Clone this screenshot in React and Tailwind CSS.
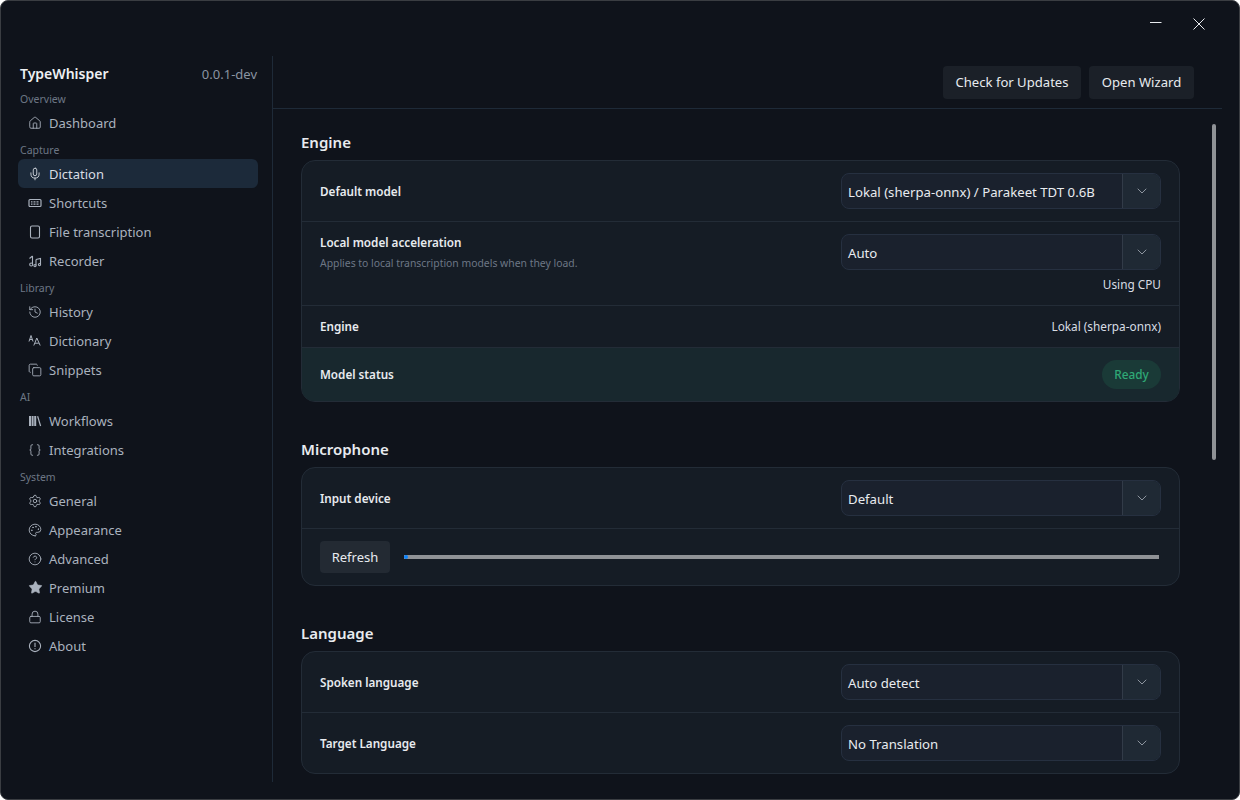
import React from "react";
import { House, Mic, History, Copy, Braces, Settings, Palette, CircleHelp, Star, Lock, ChevronDown } from "lucide-react";

const svgProps = ({ size = 14, strokeWidth, ...p }) => ({ width: size, height: size, ...p });

const KeyboardIcon = (p) => (
  <svg viewBox="0 0 14 14" fill="none" {...svgProps(p)}>
    <rect x="1" y="3.5" width="12" height="7" rx="1" stroke="currentColor" strokeWidth="1.2" />
    <path d="M3 5.8h8M3 8.2h8" stroke="currentColor" strokeWidth="1.3" strokeDasharray="1 .5" />
  </svg>
);
const FileIcon = (p) => (
  <svg viewBox="0 0 14 14" fill="none" {...svgProps(p)}>
    <rect x="2.5" y="1" width="9" height="12" rx="1.5" stroke="currentColor" strokeWidth="1.1" />
  </svg>
);
const NotesIcon = (p) => (
  <svg viewBox="0 0 14 14" fill="none" stroke="currentColor" strokeWidth="1.1" {...svgProps(p)}>
    <path d="M4.5 10V2M4.5 2 L1.5 4.5M8 5.5l4.5-1v6" />
    <circle cx="3.2" cy="10.5" r="1.5" />
    <path d="M8 5.5v6" />
    <circle cx="7" cy="11.6" r="1.1" />
    <circle cx="11.5" cy="10.6" r="1.1" />
  </svg>
);
const FontIcon = (p) => (
  <svg viewBox="0 0 14 14" fill="none" stroke="currentColor" strokeWidth="1" {...svgProps(p)}>
    <path d="M1 7.5 3 1.5l2 6M1.7 5.5h2.6" />
    <path d="M5.8 11.5 8.8 4l3.4 7.5M7 9.2h3.8" />
  </svg>
);
const InfoIcon = (p) => (
  <svg viewBox="0 0 14 14" fill="none" stroke="currentColor" strokeWidth="1.1" {...svgProps(p)}>
    <circle cx="7" cy="7" r="5.6" />
    <path d="M7 3.8v4.2M7 9.2v1" />
  </svg>
);
const BooksIcon = (p) => (
  <svg viewBox="0 0 14 14" {...svgProps(p)}>
    <path fill="currentColor" d="M1 2h2v10H1zM3.6 2h2v10h-2zM6.2 2h2v10h-2z" />
    <path fill="none" stroke="currentColor" strokeWidth="1.2" d="M9.6 2.2 12.6 12" />
  </svg>
);
const StarIcon = (p) => <Star fill="currentColor" {...p} strokeWidth={1} size={15} style={{ marginRight: -1 }} />;

const GROUPS = [
  ["Overview", [["Dashboard", House]]],
  ["Capture", [["Dictation", Mic, true], ["Shortcuts", KeyboardIcon], ["File transcription", FileIcon], ["Recorder", NotesIcon]]],
  ["Library", [["History", History], ["Dictionary", FontIcon], ["Snippets", Copy]]],
  ["AI", [["Workflows", BooksIcon], ["Integrations", Braces]]],
  ["System", [["General", Settings], ["Appearance", Palette], ["Advanced", CircleHelp], ["Premium", StarIcon], ["License", Lock], ["About", InfoIcon]]],
];

function Select({ value }) {
  return (
    <div className="flex h-9 w-80 shrink-0 overflow-hidden rounded-lg border border-[#263040] bg-[#1a212d]">
      <div className="flex flex-1 items-center pl-[6px] pt-[3px] text-[13.2px] text-[#e8ebef]">{value}</div>
      <div className="flex w-[38px] items-center justify-center border-l border-[#323b48] bg-[#1f2934] pb-px text-[#aab1bb]">
        <ChevronDown size={16} strokeWidth={1.2} />
      </div>
    </div>
  );
}

function Row({ label, desc, children, className = "h-[61px] items-center" }) {
  return (
    <div className={`flex justify-between border-b border-[#232c37] px-[18px] last:border-b-0 ${className}`}>
      <div>
        <div className="text-[11.7px] font-semibold leading-[18px] text-[#e8ebef]">{label}</div>
        {desc && <div className="mt-[5px] text-[10.4px] leading-[14px] text-[#6d7785]">{desc}</div>}
      </div>
      {children}
    </div>
  );
}

function Section({ title, children }) {
  return (
    <section className="mb-[35px]">
      <h2 className="mb-[6px] h-6 text-[15px] font-semibold leading-6 text-[#e8ebef]">{title}</h2>
      <div className="rounded-[14px] border border-[#232c37] bg-[#151c25]">{children}</div>
    </section>
  );
}

export default function App() {
  return (
    <div className="flex h-[800px] w-[1240px] flex-col overflow-hidden rounded-lg border border-[#3a3d42] bg-[#0f131b] font-['Noto_Sans',sans-serif]">
      <header className="flex h-[55px] shrink-0 items-start justify-end text-[#e8ebef]">
        <svg width="12" height="12" viewBox="0 0 12 12" className="mr-[31px] mt-[15px]" stroke="currentColor" strokeWidth="1"><path d="M0 6.5h11.5" /></svg>
        <svg width="12" height="12" viewBox="0 0 12 12" className="mr-[34px] mt-[17px]" stroke="currentColor" strokeWidth="1" fill="none"><path d="M.5.5l11 11M11.5.5l-11 11" /></svg>
      </header>
      <div className="mb-[17px] flex min-h-0 flex-1">
        <aside className="w-[272px] shrink-0 border-r border-[#1e2a38] pl-[17px] pr-[14px]">
          <div className="flex h-[30px] items-center justify-between pl-[2px] pr-px pt-[6px]">
            <span className="text-[14px] font-semibold leading-5 text-[#eef0f3]">TypeWhisper</span>
            <span className="text-[13px] leading-5 text-[#8a94a2]">0.0.1-dev</span>
          </div>
          <nav>
            {GROUPS.map(([name, items]) => (
              <div key={name}>
                <div className="mb-px mt-[5px] h-4 pl-[2px] text-[10.5px] leading-4 text-[#6d7785]">{name}</div>
                {items.map(([label, Icon, active]) => (
                  <div key={label} className={`flex h-[29px] items-center gap-[7px] whitespace-nowrap rounded-md pl-[10px] text-[13px] ${active ? "bg-[#1c2a3a] text-[#d8dde4]" : "text-[#aab2be]"}`}>
                    <Icon size={14} className={`shrink-0 ${active ? "text-[#d8dde4]" : "text-[#aab2be]"}`} strokeWidth={1.5} />
                    <span className="pt-[2px]">{label}</span>
                  </div>
                ))}
              </div>
            ))}
          </nav>
        </aside>
        <main className="relative mr-[17px] flex min-w-0 flex-1 flex-col">
          <div className="flex h-[53px] shrink-0 items-start justify-end gap-2 border-b border-[#1e2a38] pr-[28px] pt-[10px]">
            <button className="h-[33px] w-[138px] rounded-[4px] bg-[#1b2028] text-[13.1px] text-[#e8ebef]">Check for Updates</button>
            <button className="h-[33px] w-[105px] rounded-[4px] bg-[#1b2028] text-[13.1px] text-[#e8ebef]">Open Wizard</button>
          </div>
          <div className="min-h-0 flex-1 overflow-hidden pl-7 pr-[42px] pt-[21px]">
            <Section title="Engine">
              <Row label="Default model"><Select value="Lokal (sherpa-onnx) / Parakeet TDT 0.6B" /></Row>
              <Row label="Local model acceleration" desc="Applies to local transcription models when they load." className="h-[84px] pt-[11px]">
                <div className="flex flex-col items-end pt-px">
                  <Select value="Auto" />
                  <span className="mt-[5px] text-[11.8px] leading-[18px] text-[#d8dde4]">Using CPU</span>
                </div>
              </Row>
              <Row label="Engine" className="h-[42px] items-center pb-[2px]"><span className="text-[11.8px] leading-[18px] text-[#d8dde4]">Lokal (sherpa-onnx)</span></Row>
              <Row label="Model status" className="h-[53px] items-center rounded-b-[12px] bg-[#18282e] [&>div:first-child]:-mt-[2px]">
                <span className="flex h-[29px] w-[59px] items-center justify-center rounded-full bg-[#1a3a37] text-[11.8px] font-medium text-[#2fa876]">Ready</span>
              </Row>
            </Section>
            <Section title="Microphone">
              <Row label="Input device"><Select value="Default" /></Row>
              <div className="flex h-[56px] items-center gap-[14px] pl-[18px] pr-5">
                <button className="h-8 w-[70px] rounded-[4px] bg-[#232a33] pt-px text-[13px] text-[#e8ebef]">Refresh</button>
                <div className="relative h-1 flex-1 bg-[#8f9296]">
                  <div className="absolute left-0 top-0 h-1 w-1 rounded-sm bg-[#0a84ff]" />
                </div>
              </div>
            </Section>
            <Section title="Language">
              <Row label="Spoken language"><Select value="Auto detect" /></Row>
              <Row label="Target Language" className="h-[60px] items-center"><Select value="No Translation" /></Row>
            </Section>
          </div>
          <div className="absolute left-[939px] top-[68px] h-[336px] w-1 rounded-full bg-[#8f9296]" />
        </main>
      </div>
    </div>
  );
}
